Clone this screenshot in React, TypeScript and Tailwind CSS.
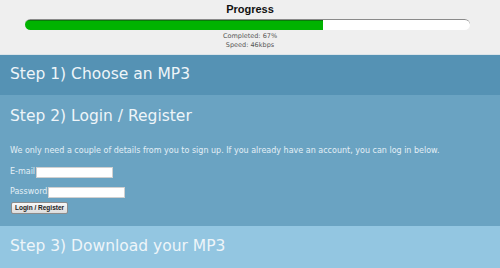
export default function App() {
  const font = { fontFamily: '"DejaVu Sans", sans-serif' };
  return (
    <div className="w-[500px] h-[268px] overflow-hidden flex flex-col" style={font}>
      <div className="h-[55px] bg-[#efefef] flex flex-col items-center border-b border-[#dbe4e9]">
        <div className="text-[11px] font-bold text-[#111] leading-none mt-[4px] font-['Liberation_Sans',sans-serif]">Progress</div>
        <div className="self-start ml-[25px] mt-[4px] w-[445px] h-[11px] rounded-full bg-white overflow-hidden border-t border-[#8a8a8a]">
          <div className="h-full w-[67%] bg-[#00b300] border-t border-[#0a7a0a]" />
        </div>
        <div className="text-[6.5px] text-[#555] leading-[9px] mt-[2px] text-center">
          <div>Completed: 67%</div>
          <div>Speed: 46kbps</div>
        </div>
      </div>
      <div className="h-[40px] bg-[#5592b4] flex items-center px-[10px]">
        <div className="text-[15.5px] text-[#eef5f9] leading-none">Step 1) Choose an MP3</div>
      </div>
      <div className="h-[131px] bg-[#6aa3c2] px-[10px] flex flex-col">
        <div className="h-[17px] text-[15.5px] text-[#eef5f9] leading-[17px] mt-[13px]">Step 2) Login / Register</div>
        <div className="h-[9px] text-[8px] text-[#e3eff6] leading-[9px] mt-[21px] whitespace-nowrap">
          We only need a couple of details from you to sign up. If you already have an account, you can log in below.
        </div>
        <div className="h-[12px] flex items-center mt-[11px] text-[8px] text-[#e3eff6] leading-none">
          <span>E-mail</span>
          <div className="ml-[1px] w-[77px] h-[11px] bg-white border border-[#d0d0d0]" />
        </div>
        <div className="h-[12px] flex items-center mt-[8px] text-[8px] text-[#e3eff6] leading-none">
          <span>Password</span>
          <div className="ml-[1px] w-[77px] h-[11px] bg-white border border-[#d0d0d0]" />
        </div>
        <div className="h-[12px] mt-[4px] flex">
          <button className="h-[12px] w-[57px] ml-[1px] bg-gradient-to-b from-[#f8f8f8] to-[#dcdcdc] border border-[#8c8c8c] rounded-[2px] text-[6.5px] font-bold text-[#222] leading-none flex items-center justify-center font-['Liberation_Sans',sans-serif]">
            Login / Register
          </button>
        </div>
      </div>
      <div className="flex-1 bg-[#93c6e1] flex items-center px-[10px]">
        <div className="text-[15.5px] text-[#eef5f9] leading-none">Step 3) Download your MP3</div>
      </div>
    </div>
  );
}
